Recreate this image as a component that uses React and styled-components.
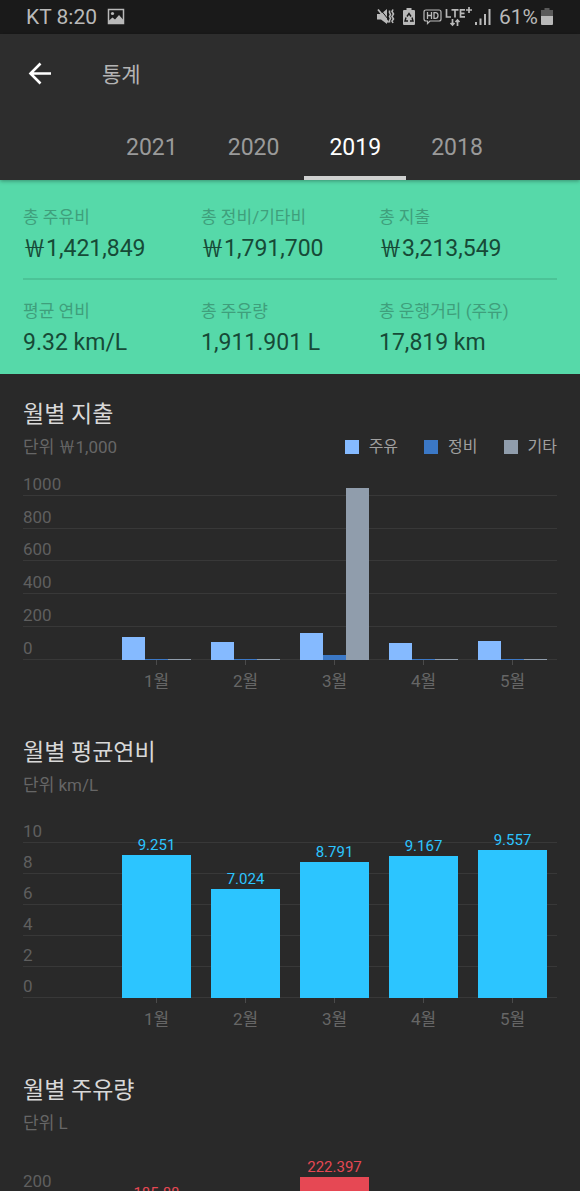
import React from "react";
import styled, { createGlobalStyle } from "styled-components";

const Global = createGlobalStyle`
  * { box-sizing: border-box; }
  body {
    margin: 0;
    background: #292929;
    color: #d6d6d6;
    font-family: Roboto, "Noto Sans CJK KR", sans-serif;
  }
`;

const Screen = styled.div`
  height: 100vh;
  display: flex;
  flex-direction: column;
  overflow: hidden;
`;

const StatusBar = styled.div`
  flex: none;
  height: 34px;
  padding: 0 27px 0 26px;
  display: flex;
  align-items: center;
  justify-content: space-between;
  background: #1a1a1a;
  color: #b9b9b9;
  font-size: 21px;
  line-height: 34px;
`;

const StatusGroup = styled.div`
  display: flex;
  align-items: center;
  gap: ${(p) => p.$gap}px;
`;

const AppBar = styled.header`
  flex: none;
  position: relative;
  z-index: 2;
  background: #2d2d2d;
  box-shadow: 0 1px 4px rgba(0, 0, 0, 0.35);
`;

const TitleRow = styled.div`
  height: 80px;
  padding-left: 26px;
  display: flex;
  align-items: center;
  gap: 48px;
`;

const BackButton = styled.button`
  width: 28px;
  height: 28px;
  padding: 0;
  border: 0;
  background: none;
  color: #fff;
  display: flex;
`;

const PageTitle = styled.h1`
  margin: 0;
  padding-top: 2px;
  font-size: 21px;
  line-height: 28px;
  font-weight: 400;
  color: #b4b4b4;
`;

const Tabs = styled.nav`
  display: flex;
  padding-left: 101px;
`;

const Tab = styled.button`
  height: 66px;
  padding: 6px 25px 0;
  border: 0;
  border-bottom: 4px solid ${(p) => (p.$active ? "#cfd1d0" : "transparent")};
  background: none;
  color: ${(p) => (p.$active ? "#fff" : "#9a9a9a")};
  font: inherit;
  font-size: 23px;
  line-height: 56px;
`;

const Content = styled.main`
  flex: 1;
  min-height: 0;
  overflow-y: auto;
  scrollbar-width: none;
`;

const Summary = styled.section`
  padding: 0 23px;
  background: #56d9a9;
`;

const SummaryRow = styled.dl`
  margin: 0;
  padding: ${(p) => (p.$last ? "19px 0 17px" : "25px 0 15px")};
  display: grid;
  grid-template-columns: repeat(3, 1fr);
  border-bottom: ${(p) => (p.$last ? "0" : "2px solid #4cc397")};
`;

const SummaryLabel = styled.dt`
  font-size: 17px;
  line-height: 24px;
  color: #3f9f7c;
  white-space: nowrap;
`;

const SummaryValue = styled.dd`
  margin: 0;
  padding-top: 6px;
  font-size: 23px;
  line-height: 28px;
  color: #164a37;
  white-space: nowrap;
`;

const Won = styled.span`
  font-family: "Noto Sans CJK KR", sans-serif;
  font-feature-settings: "fwid";
  line-height: 1;
`;

const ChartCard = styled.section`
  padding: 24px 23px 0;
  height: 338px;
  display: flex;
  flex-direction: column;
`;

const ChartTitle = styled.h2`
  margin: 0;
  font-size: 23px;
  line-height: 34px;
  font-weight: 400;
  color: #d8d8d8;
`;

const ChartMeta = styled.div`
  display: flex;
  justify-content: space-between;
  align-items: center;
  height: 30px;
  font-size: 17px;
  line-height: 24px;
`;

const Unit = styled.span`
  color: #666;
`;

const Legend = styled.ul`
  margin: 0;
  padding: 0;
  display: flex;
  gap: 26px;
  list-style: none;
  font-size: 16px;
  color: #a0a0a0;
`;

const LegendItem = styled.li`
  display: flex;
  align-items: center;
  gap: 10px;

  &::before {
    content: "";
    width: 14px;
    height: 14px;
    background: ${(p) => p.$color};
  }
`;

const Plot = styled.div`
  height: ${(p) => p.$height}px;
  margin-top: auto;
  display: grid;
`;

const Scale = styled.div`
  grid-area: 1 / 1;
  display: flex;
  flex-direction: column;
`;

const ScaleRow = styled.div`
  flex: 1;
  min-height: 0;
  display: flex;
  align-items: flex-end;
  border-bottom: 1px solid #383838;
  padding-bottom: 1px;
  font-size: 17px;
  line-height: 20px;
  color: #5f5f5f;
`;

const Columns = styled.div`
  grid-area: 1 / 1;
  display: grid;
  grid-template-columns: repeat(6, 1fr);
  z-index: 1;
`;

const Column = styled.div`
  grid-column: ${(p) => p.$index + 2};
  padding: 0 10px;
  display: flex;
  align-items: flex-end;
`;

const Bar = styled.div`
  flex: 1;
  min-height: 1px;
  background: ${(p) => p.$color};
  color: ${(p) => p.$color};
`;

const BarValue = styled.div`
  height: 0;
  display: flex;
  align-items: flex-end;
  justify-content: center;
  font-size: 15px;
  line-height: 19px;
`;

const Months = styled.div`
  flex: none;
  height: 52px;
  display: grid;
  grid-template-columns: repeat(6, 1fr);
  font-size: 17px;
  line-height: 24px;
  color: #666;
`;

const Month = styled.div`
  grid-column: ${(p) => p.$index + 2};
  display: flex;
  flex-direction: column;
  align-items: center;
  gap: 4px;

  &::before {
    content: "";
    width: 1px;
    height: 5px;
    background: #4a4a4a;
  }
`;

const SUMMARY = [
  [
    ["총 주유비", "₩1,421,849"],
    ["총 정비/기타비", "₩1,791,700"],
    ["총 지출", "₩3,213,549"],
  ],
  [
    ["평균 연비", "9.32 km/L"],
    ["총 주유량", "1,911.901 L"],
    ["총 운행거리 (주유)", "17,819 km"],
  ],
];

const MONTHS = ["1월", "2월", "3월", "4월", "5월"];

const CHARTS = [
  {
    title: "월별 지출",
    unit: "단위 ₩1,000",
    height: 197,
    ticks: [1000, 800, 600, 400, 200, 0],
    colors: ["#85baff", "#3b78c6", "#909dac"],
    legend: ["주유", "정비", "기타"],
    data: [[140, 0, 0], [110, 0, 0], [166, 30, 1050], [103, 0, 0], [116, 0, 0]],
  },
  {
    title: "월별 평균연비",
    unit: "단위 km/L",
    height: 186,
    ticks: [10, 8, 6, 4, 2, 0],
    colors: ["#2cc5ff"],
    labelled: true,
    data: [["9.251"], ["7.024"], ["8.791"], ["9.167"], ["9.557"]],
  },
  {
    title: "월별 주유량",
    unit: "단위 L",
    height: 179,
    ticks: [200, 150, 100, 50, 0],
    colors: ["#e64854"],
    labelled: true,
    data: [["185.88"], ["140.12"], ["222.397"], ["151.204"], ["162.731"]],
  },
];

function Money({ text }) {
  const [before, after] = text.split("₩");
  return after === undefined ? text : <>{before}<Won>₩</Won>{after}</>;
}

function Chart({ title, unit, height, ticks, colors, legend, labelled, data }) {
  const top = ticks[0] + ticks[0] / (ticks.length - 1);
  return (
    <ChartCard>
      <ChartTitle>{title}</ChartTitle>
      <ChartMeta>
        <Unit><Money text={unit} /></Unit>
        {legend && (
          <Legend>
            {legend.map((name, i) => (
              <LegendItem key={name} $color={colors[i]}>{name}</LegendItem>
            ))}
          </Legend>
        )}
      </ChartMeta>
      <Plot $height={height}>
        <Scale>
          {ticks.map((t) => <ScaleRow key={t}>{t}</ScaleRow>)}
        </Scale>
        <Columns>
          {data.map((values, i) => (
            <Column key={i} $index={i}>
              {values.map((v, j) => (
                <Bar key={j} $color={colors[j]} style={{ height: `${(v / top) * 100}%` }}>
                  {labelled && <BarValue>{v}</BarValue>}
                </Bar>
              ))}
            </Column>
          ))}
        </Columns>
      </Plot>
      <Months>
        {MONTHS.map((m, i) => <Month key={m} $index={i}>{m}</Month>)}
      </Months>
    </ChartCard>
  );
}

const PictureIcon = () => (
  <svg width="18" height="18" viewBox="0 0 18 18" aria-hidden="true">
    <path d="M1.5 1.5h15v14h-15z" fill="none" stroke="currentColor" strokeWidth="1.5" />
    <path d="M2 12.500l3.500-3 2.500 2L12 7l4 4.500V15H2z" fill="currentColor" />
    <circle cx="5.5" cy="5.5" r="1.6" fill="currentColor" />
  </svg>
);

const MuteVibrateIcon = () => (
  <svg width="18" height="18" viewBox="0 0 18 18" fill="none" stroke="currentColor" aria-hidden="true">
    <path d="M0 6h4l6-5v15l-6-4.500H0z" fill="currentColor" stroke="none" />
    <path d="M3 1l8 10" stroke="#1a1a1a" strokeWidth="1" />
    <path d="M1 1.500l10.500 13" strokeWidth="1.800" />
    <path d="M12.500 2.500v2l1 2-1 2 1 2-1 2v2M16 1.500l-1 2 1.500 2.500-1.500 2.500 1.500 2.500-1.500 2 1 2" strokeWidth="1.600" />
  </svg>
);

const BatterySaverIcon = () => (
  <svg width="12" height="18" viewBox="0 0 12 18" aria-hidden="true">
    <path d="M3.500 0h5v2H11q1 0 1 1v13q0 1-1 1H1q-1 0-1-1V3q0-1 1-1h2.500z" fill="currentColor" />
    <path d="M4 8.500L6 5.500l2 3M9 9.500l1 3.500H7M5 13H2l1-3.500" fill="none" stroke="#1a1a1a" strokeWidth="1.400" />
  </svg>
);

const HdIcon = () => (
  <svg width="19" height="18" viewBox="0 0 19 18" fill="none" stroke="currentColor" aria-hidden="true">
    <path d="M3 2h13q2 0 2 2v7q0 2-2 2H7l-2.500 2.500V13H3q-2 0-2-2V4q0-2 2-2z" strokeWidth="1.200" />
    <path d="M4.500 4v7M8.500 4v7M4.500 7.500h4M11 4.600v5.800h1.500q2.500 0 2.500-2.900t-2.500-2.900z" strokeWidth="1.300" />
  </svg>
);

const LteIcon = () => (
  <svg width="27" height="20" viewBox="0 0 27 20" fill="none" stroke="currentColor" aria-hidden="true">
    <path d="M1.500 2v8H6M6.500 2.800h7M10 2.800V10.500M20 2.800h-4.500v7H20M15.500 6.300h4M24 0v6M21 3h6" strokeWidth="1.700" />
    <path d="M7.500 12v6M5.500 16l2 2 2-2M12.500 19v-6M10.500 15l2-2 2 2" strokeWidth="1.700" />
  </svg>
);

const SignalIcon = () => (
  <svg width="16" height="18" viewBox="0 0 16 18" fill="currentColor" aria-hidden="true">
    <path d="M0 14h2v3H0zM4.500 10.500h2V17h-2zM9 6h2v11H9zM13.500 1h2v16h-2z" />
  </svg>
);

const BatteryIcon = () => (
  <svg width="12" height="18" viewBox="0 0 12 18" aria-hidden="true">
    <path d="M3.500 0h5v2H12v6H0V2h3.500z" fill="#5a5a5a" />
    <path d="M0 8h12v8q0 1-1 1H1q-1 0-1-1z" fill="currentColor" />
  </svg>
);

const ArrowIcon = () => (
  <svg width="28" height="28" viewBox="0 0 28 28" fill="none" stroke="currentColor" strokeWidth="2.600" aria-hidden="true">
    <path d="M25 13.500H4.500M14.500 3.500l-10 10 10 10" />
  </svg>
);

export default function App() {
  return (
    <Screen>
      <Global />
      <StatusBar>
        <StatusGroup $gap={10}>
          <span>KT 8:20</span>
          <PictureIcon />
        </StatusGroup>
        <StatusGroup $gap={8}>
          <MuteVibrateIcon />
          <BatterySaverIcon />
          <StatusGroup $gap={3}>
            <HdIcon />
            <LteIcon />
            <SignalIcon />
          </StatusGroup>
          <StatusGroup $gap={3}>
            <span>61%</span>
            <BatteryIcon />
          </StatusGroup>
        </StatusGroup>
      </StatusBar>
      <AppBar>
        <TitleRow>
          <BackButton aria-label="뒤로"><ArrowIcon /></BackButton>
          <PageTitle>통계</PageTitle>
        </TitleRow>
        <Tabs>
          {["2021", "2020", "2019", "2018"].map((y) => (
            <Tab key={y} $active={y === "2019"}>{y}</Tab>
          ))}
        </Tabs>
      </AppBar>
      <Content>
        <Summary>
          {SUMMARY.map((row, i) => (
            <SummaryRow key={i} $last={i === 1}>
              {row.map(([label, value]) => (
                <div key={label}>
                  <SummaryLabel>{label}</SummaryLabel>
                  <SummaryValue><Money text={value} /></SummaryValue>
                </div>
              ))}
            </SummaryRow>
          ))}
        </Summary>
        {CHARTS.map((c) => <Chart key={c.title} {...c} />)}
      </Content>
    </Screen>
  );
}
